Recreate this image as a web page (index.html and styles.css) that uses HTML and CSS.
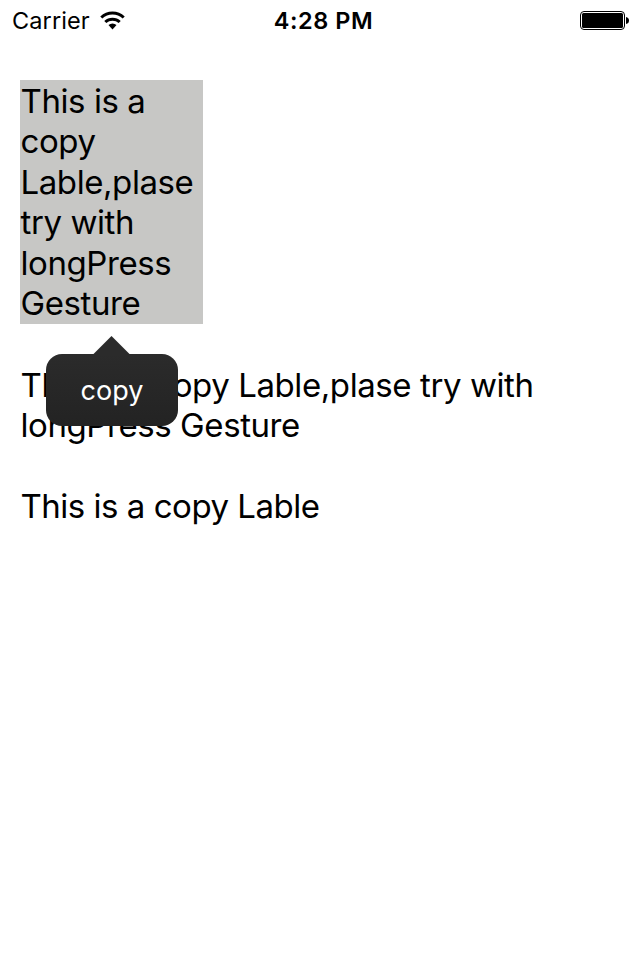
FILE: index.html
```html
<!DOCTYPE html>
<html lang="en">
<head>
<meta charset="utf-8">
<title>Copy Label</title>
<link rel="stylesheet" href="styles.css">
</head>
<body>
<header class="status">
  <div class="left"><span class="carrier">Carrier</span>
    <svg class="wifi" width="26" height="20" viewBox="0 0 26 20"><g fill="none" stroke="#000" stroke-width="3"><path d="M1.3 6.5a16.2 16.2 0 0 1 22.4 0"/><path d="M5.3 11a10.5 10.5 0 0 1 14.4 0"/></g><path d="M12.5 18.5l-4-4.4a6 6 0 0 1 8 0z"/></svg>
  </div>
  <div class="time"><span>4:28 PM</span></div>
  <div class="right"><svg width="50" height="20" viewBox="0 0 50 20"><rect x=".5" y=".5" width="44" height="18" rx="3.5" fill="none" stroke="#000"/><rect x="2" y="2" width="41" height="15" rx="1.5"/><path d="M46 6q3 .5 3 3.5t-3 3.5z"/></svg></div>
</header>
<main class="content">
  <div class="selected">
    <p class="label"><span>This is a</span><br><span>copy</span><br><span>Lable,plase</span><br><span>try with</span><br><span>longPress</span><br><span>Gesture</span></p>
    <div class="menu"><span>copy</span></div>
  </div>
  <p class="label second"><span>This is a copy Lable,plase try with</span><br><span>longPress Gesture</span></p>
  <p class="label third"><span>This is a copy Lable</span></p>
</main>
</body>
</html>
```
FILE: styles.css
```css
body { margin: 0; background: #fff; color: #000; font-family: Inter, sans-serif; height: 960px; overflow: hidden; }
p { margin: 0; }
.status { height: 40px; display: grid; grid-template-columns: 1fr 1fr 1fr; align-items: center; font-size: 23.5px; line-height: 40px; }
.left { display: flex; align-items: center; gap: 10px; padding-left: 12px; }
.carrier { padding-top: 1px; letter-spacing: 0.1px; }
.time { text-align: center; font-weight: 600; letter-spacing: 0.55px; padding: 1px 0 0 7px; }
.right { display: flex; justify-content: flex-end; padding: 1px 10px 0 0; }
.content { padding: 40px 20px 0; }
.label { font-size: 33px; line-height: 40.5px; letter-spacing: -0.42px; white-space: nowrap; padding: 0.5px 0 0 0.5px; }
.selected { position: relative; z-index: 1; width: 183px; height: 244px; background: #c7c7c5; }
.menu { position: absolute; left: 26px; top: 274px; width: 132px; height: 72px; border-radius: 16px; background: linear-gradient(#2b2b2b, #232323); color: #fff; font-size: 27px; line-height: 74px; text-align: center; }
.menu::before { content: ""; position: absolute; left: 46.5px; top: -18px; width: 38px; height: 19px; background: #2b2b2b; clip-path: polygon(50% 0, 100% 100%, 0 100%); }
.second { margin-top: 40px; line-height: 40px; }
.third { margin-top: 41px; letter-spacing: -0.48px; }
```
